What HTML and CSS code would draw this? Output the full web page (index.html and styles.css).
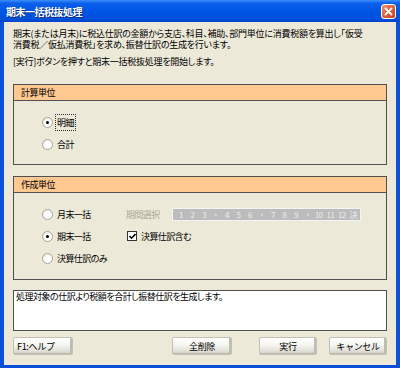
FILE: index.html
```html
<!DOCTYPE html>
<html lang="ja">
<head>
    <meta charset="UTF-8">
    <title>期末一括税抜処理</title>
    <link rel="stylesheet" href="styles.css">
</head>
<body>
    <div class="window">
        <div class="titlebar">
            <span class="title">期末一括税抜処理</span>
            <span class="close">
                <svg width="13" height="13" viewBox="0 0 13 13">
                    <path d="M3.5 3.5 L9.5 9.5 M9.5 3.5 L3.5 9.5" stroke="#fff" stroke-width="1.8" stroke-linecap="round"/>
                </svg>
            </span>
        </div>

        <div class="client">
            <p class="intro">期末(または月末)に税込仕訳の金額から支店、科目、補助、部門単位に消費税額を算出し「仮受<br>消費税／仮払消費税」を求め、振替仕訳の生成を行います。</p>
            <p class="intro second">[実行]ボタンを押すと期末一括税抜処理を開始します。</p>

            <div class="group first-group">
                <div class="group-head">計算単位</div>
                <div class="group-body">
                    <div class="row">
                        <span class="radio checked"></span><span class="label focus">明細</span>
                    </div>
                    <div class="row">
                        <span class="radio"></span><span class="label">合計</span>
                    </div>
                </div>
            </div>

            <div class="group second-group">
                <div class="group-head">作成単位</div>
                <div class="group-body">
                    <div class="row">
                        <div class="option"><span class="radio"></span><span class="label">月末一括</span></div>
                        <span class="disabled-label">期間選択</span>
                        <div class="period">
                            <span>1</span><span>2</span><span>3</span><span>・</span>
                            <span>4</span><span>5</span><span>6</span><span>・</span>
                            <span>7</span><span>8</span><span>9</span><span>・</span>
                            <span>10</span><span>11</span><span>12</span><span>決</span>
                        </div>
                    </div>
                    <div class="row">
                        <div class="option"><span class="radio checked"></span><span class="label">期末一括</span></div>
                        <span class="checkbox">
                            <svg width="7" height="7" viewBox="0 0 7 7">
                                <path d="M0.5 3 L2.5 5.2 L6.5 1" stroke="#000" stroke-width="1.6" fill="none"/>
                            </svg>
                        </span><span class="label">決算仕訳含む</span>
                    </div>
                    <div class="row">
                        <div class="option"><span class="radio"></span><span class="label">決算仕訳のみ</span></div>
                    </div>
                </div>
            </div>

            <div class="memo">処理対象の仕訳より税額を合計し振替仕訳を生成します。</div>

            <div class="buttons">
                <button class="btn btn-help">F1:ヘルプ</button>
                <button class="btn btn-clear">全削除</button>
                <button class="btn btn-run">実行</button>
                <button class="btn">キャンセル</button>
            </div>
        </div>
    </div>
</body>
</html>
```

FILE: styles.css
```css
body {
    margin: 0;
    padding: 0;
    font-family: "Noto Sans CJK JP", "Noto Sans", sans-serif;
    font-size: 9px;
    color: #000;
    background-color: #fff;
}

.window {
    width: 400px;
    height: 368px;
    display: flex;
    flex-direction: column;
    background-color: #0a50d8;
    box-sizing: border-box;
}

.titlebar {
    height: 22px;
    flex-shrink: 0;
    display: flex;
    align-items: center;
    justify-content: space-between;
    padding: 0 4px 0 6px;
    background: linear-gradient(#3d8ff7 0, #0a5fec 15%, #0055e5 50%, #0052dd 85%, #0043c8 100%);
}

.title {
    color: #fff;
    font-weight: 700;
    font-size: 10px;
    letter-spacing: -0.5px;
    text-shadow: 1px 1px 0 #0a2c7a;
}

.close {
    width: 13px;
    height: 13px;
    border: 1px solid #fff;
    border-radius: 3px;
    background: linear-gradient(135deg, #f09070 0, #e2603c 50%, #c8401c 100%);
    display: flex;
}

.client {
    flex: 1;
    margin: 0 4px 3px 4px;
    padding: 6px 9px 0 9px;
    background-color: #ece9d8;
}

.intro {
    margin: 0;
    line-height: 11px;
    font-feature-settings: "palt";
    letter-spacing: -0.25px;
    white-space: nowrap;
}

.intro.second {
    margin-top: 6px;
}

.group {
    border: 1px solid #505050;
}

.first-group {
    margin-top: 17px;
}

.second-group {
    margin-top: 11px;
}

.group-head {
    height: 15px;
    line-height: 15px;
    padding-left: 7px;
    background-color: #ffc890;
    border-bottom: 1px solid #505050;
    letter-spacing: -0.5px;
}

.group-body {
    padding: 10px 0 9px 28px;
}

.second-group .group-body {
    padding-bottom: 10px;
}

.row {
    height: 22px;
    display: flex;
    align-items: center;
}

.option {
    width: 84px;
    display: flex;
    align-items: center;
}

.radio {
    width: 9px;
    height: 9px;
    border: 1px solid #a8a598;
    border-radius: 50%;
    background: radial-gradient(circle at 60% 60%, #fff 40%, #e4e2da 100%);
    display: inline-flex;
    align-items: center;
    justify-content: center;
    margin-right: 3px;
}

.radio.checked::after {
    content: "";
    width: 3px;
    height: 3px;
    border-radius: 50%;
    background-color: #000;
}

.label {
    letter-spacing: -0.6px;
    font-feature-settings: "palt";
    padding: 1px;
}

.label.focus {
    outline: 1px dotted #333;
    outline-offset: 0;
}

.disabled-label {
    width: 46px;
    color: #aca899;
    letter-spacing: -0.6px;
}

.period {
    width: 185px;
    height: 11px;
    padding-left: 2px;
    border: 1px solid #f4f4f4;
    background-color: #bcbcbc;
    color: #ececec;
    display: flex;
    align-items: center;
    font-size: 8px;
    letter-spacing: -0.8px;
}

.period span {
    width: 11.5px;
    text-align: center;
}

.checkbox {
    width: 8px;
    height: 8px;
    border: 1px solid #333;
    background-color: #fff;
    display: inline-flex;
    align-items: center;
    justify-content: center;
    margin: 0 3px 0 1px;
}

.memo {
    margin-top: 10px;
    height: 39px;
    padding: 0 2px;
    line-height: 11px;
    background-color: #fff;
    border: 1px solid #505050;
    letter-spacing: -0.5px;
    font-feature-settings: "palt";
}

.buttons {
    display: flex;
    margin-top: 6px;
}

.btn {
    width: 58px;
    height: 18px;
    padding: 0;
    font-family: inherit;
    font-size: 9px;
    letter-spacing: -0.3px;
    color: #000;
    border: 1px solid #c4c1b4;
    border-radius: 2px;
    background: linear-gradient(#ffffff 0, #f4f4f0 45%, #e2e0d8 80%, #cfccc0 100%);
    box-shadow: inset -2px -1px 0 #bfbcb0;
}

.btn-help {
    width: 60px;
    text-align: left;
    padding-left: 3px;
}

.btn-clear {
    width: 60px;
    margin-left: auto;
    margin-right: 27px;
}

.btn-run {
    margin-right: 12px;
}
```
